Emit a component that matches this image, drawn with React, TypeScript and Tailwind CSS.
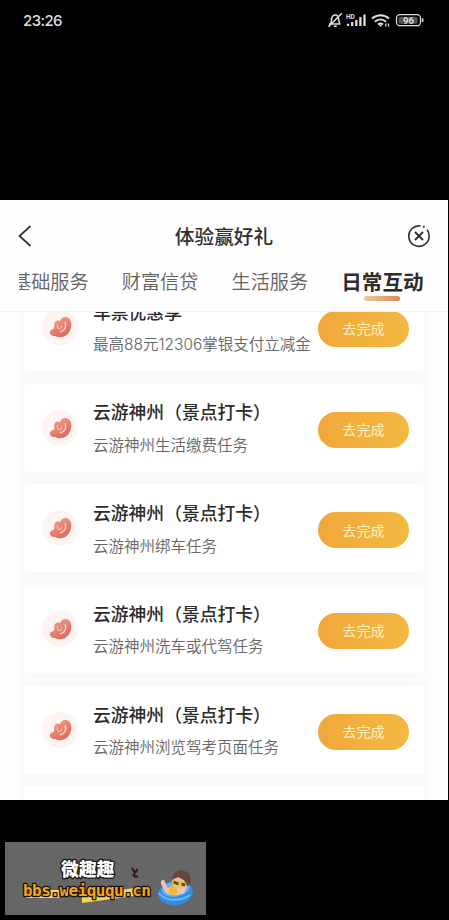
import { clsx } from "clsx";

interface Task {
  title: string;
  desc: string;
}

const tabs = ["基础服务", "财富信贷", "生活服务", "日常互动"];

const tasks: Task[] = [
  { title: "车票优惠享", desc: "最高88元12306掌银支付立减金" },
  { title: "云游神州（景点打卡）", desc: "云游神州生活缴费任务" },
  { title: "云游神州（景点打卡）", desc: "云游神州绑车任务" },
  { title: "云游神州（景点打卡）", desc: "云游神州洗车或代驾任务" },
  { title: "云游神州（景点打卡）", desc: "云游神州浏览驾考页面任务" },
];

function StatusBar() {
  return (
    <div className="flex h-10 items-center justify-between pl-[23px] pr-[25px] text-[#dedede]">
      <span className="mt-0.5 font-['Inter','Noto_Sans',sans-serif] text-[15px] font-medium tracking-[-0.6px]">
        23:26
      </span>
      <svg width="97" height="18" viewBox="0 0 97 18" fill="none" stroke="currentColor" strokeWidth="1.6">
        {/* muted bell */}
        <path d="M2 13h11.500M3.500 12.800c1.200-1.400.8-3.300 1.100-4.800C5 5.500 6.500 4 8.200 4s3.200 1.500 3.500 4c.2 1.500 0 3.300 1.200 4.800M6.800 15.200h3M14.800 2.200 1.500 15.800" />
        {/* signal */}
        <text x="19" y="7.500" fontSize="6.500" fontWeight="700" fill="currentColor" stroke="none" fontFamily="Roboto, sans-serif">
          HD
        </text>
        <path d="M21 15v-2.200M25.200 15v-4M29.300 15V9M33.400 15V6M37.500 15V3.500" strokeWidth="2.300" />
        {/* wifi */}
        <path d="M45 7.600c4.800-4.400 12.200-4.400 17 0M47.900 10.700c3.300-3 7.900-3 11.200 0M51 13.500c1.700-1.400 3.300-1.400 5 0" strokeWidth="2" />
        <path d="m51.700 13.700 1.800 2 1.800-2z" fill="currentColor" stroke="none" />
        <path d="M58.800 12.500v3M61.500 12.500v3" strokeWidth="1.300" />
        {/* battery */}
        <rect x="69.500" y="3.700" width="24" height="11" rx="3.500" strokeWidth="1.300" />
        <rect x="71.500" y="5.700" width="19" height="7" rx="1.500" fill="#555" stroke="none" />
        <path d="M95.600 7.500v3.500" strokeWidth="1.600" />
        <text x="81.500" y="12.600" textAnchor="middle" fontSize="9.500" fontWeight="700" fill="currentColor" stroke="none" fontFamily="Roboto, sans-serif">
          96
        </text>
      </svg>
    </div>
  );
}

function BeanIcon() {
  return (
    <div className="flex size-9 shrink-0 items-center justify-center rounded-full bg-[#fdf3f0]">
      <svg width="36" height="36" viewBox="0 0 36 36" fill="none">
        <defs>
          <linearGradient id="bean" x1="12" y1="8" x2="24" y2="29" gradientUnits="userSpaceOnUse">
            <stop stopColor="#eda08d" />
            <stop offset="1" stopColor="#dd6455" />
          </linearGradient>
        </defs>
        <path
          d="M12.300 17.500c-.6-3.300.6-5.600 3-6 1-.2 1.900 0 2.600.5C19.200 8.700 22.600 7 25.600 8.400c3.400 1.600 4.400 6 3.400 10.200-1.400 6-6 9.900-11.200 9.700-1.900-.1-3.300-.6-4.300-1.400-2.300.4-4.600-.6-5.400-2.500-.7-1.900.3-3.500 2.100-4 1.500-.4 2.300-1.300 2.100-2.900Z"
          fill="url(#bean)"
        />
        <path d="M23.300 13.800c1.100 4.400-.9 8-4.800 9" stroke="#fbd5ca" strokeWidth="1.500" strokeLinecap="round" />
        <path d="M15.300 15.500c-.2 2.200.5 3.700 2 4.200 1.600-.2 2.400-1.300 2.400-3" stroke="#f6bdb0" strokeWidth="1.100" strokeLinecap="round" />
      </svg>
    </div>
  );
}

function TaskCard({ title, desc }: Task) {
  return (
    <div className="flex h-[88px] shrink-0 items-center rounded-[3px] bg-white pl-[18px] pr-[15px] shadow-[0_0_14px_4px_rgba(0,0,0,0.03)]">
      <BeanIcon />
      <div className="mt-px ml-[15px] flex-1 whitespace-nowrap">
        <div className="text-[17.8px] leading-[26px] font-medium text-[#2b2b2b]">{title}</div>
        <div className="mt-[9.5px] font-['Inter','Noto_Sans_CJK_SC',sans-serif] text-[15.5px] leading-6 font-[350] text-[#666]">
          {desc}
        </div>
      </div>
      <button className="mt-1 h-9 w-[91px] shrink-0 rounded-full bg-linear-to-r from-[#f1a73a] to-[#f3b941] text-[14.2px] text-[#fff0c4]">
        去完成
      </button>
    </div>
  );
}

function Watermark() {
  return (
    <div className="absolute top-[842px] left-[5px] h-[73px] w-[201px] bg-[#666]">
      <svg width="201" height="73" viewBox="0 0 201 73">
        <path d="M21 48h33v8H21zM77 54l52-8v8l-52 7z" fill="#f6d45b" />
        <g stroke="#17120d" strokeWidth="2.500" strokeLinejoin="round" paintOrder="stroke">
          <text x="56" y="33.500" fontSize="17.800" fontWeight="900" fill="#fff" fontFamily="Noto Sans CJK SC, sans-serif">
            微趣趣
          </text>
          <text x="18" y="53.500" fontSize="16" fontWeight="700" fill="#f5a51c" textLength="128" lengthAdjust="spacing" fontFamily="DejaVu Sans Mono, monospace">
            bbs.weiququ.cn
          </text>
        </g>
        <path d="m127 26 2.500 4M132.500 27l-4.500 7M129 34.500h4" stroke="#2d1518" strokeWidth="2" />
        {/* kid on a swim ring */}
        <ellipse cx="170.500" cy="51" rx="17.500" ry="12" fill="#358ddd" transform="rotate(-8 170.500 51)" />
        <ellipse cx="170.500" cy="47" rx="14" ry="7.500" fill="#5eb2f2" transform="rotate(-8 170.500 47)" />
        <path d="M156 42c-1-4 3-6 4-2l3 6 7-4 9-1c4 1 3 7 0 10-5 3-15 3-19-1z" fill="#f0c3b0" />
        <path d="M165 45c4-3 8 0 7 6-3 3-7 2-8-1z" fill="#efba22" />
        <ellipse cx="175" cy="40" rx="8" ry="7" fill="#edb89e" />
        <path d="M167 38c0-7 6-11 12-9 6 1 8 7 6 13l-3 2-3-6-6-3z" fill="#65463a" />
        <path d="m168 38 6 2v4l-6-2zM176 40l5 1-1 4-4-1z" fill="#594b1c" stroke="#edc633" strokeWidth="1" />
        <path d="M154 51c5 7 19 10 31 2" fill="none" stroke="#6bb9fa" strokeWidth="2" />
      </svg>
    </div>
  );
}

export default function App() {
  return (
    <div className="relative h-[920px] w-[449px] overflow-hidden bg-black font-['Noto_Sans_CJK_SC',sans-serif]">
      <StatusBar />
      <main className="mt-40 flex h-[600px] w-[448px] flex-col overflow-hidden bg-[#fefefe]">
        <header className="flex h-[67px] shrink-0 items-center justify-between px-[17px] pt-1 text-[#303030]">
          <svg width="24" height="24" viewBox="0 0 24 24" fill="none" stroke="currentColor" strokeWidth="1.7">
            <path d="M13.500 2 2.500 12l11 10" />
          </svg>
          <h1 className="text-[19.700px] font-medium">体验赢好礼</h1>
          <svg width="24" height="24" viewBox="0 0 24 24" fill="none" stroke="currentColor" strokeWidth="1.600">
            <path d="M13.500 2a10.200 10.200 0 1 0 6.500 3.800" />
            <path d="m8 8 8 8M16 8l-8 8" strokeWidth="1.900" />
            <path d="M16 2.300l1.600.8" strokeWidth="2" />
          </svg>
        </header>
        <nav className="ml-[19px] flex h-11 shrink-0 overflow-hidden pt-0.5">
          <div className="-ml-[7px] flex gap-[33px]">
            {tabs.map((tab, i) => {
              const active = i === tabs.length - 1;
              return (
                <div
                  key={tab}
                  className={clsx(
                    "flex flex-col items-center whitespace-nowrap leading-6",
                    active ? "text-[20.600px] font-bold text-[#2d2d2d]" : "text-[19.200px] font-[350] text-[#636363]",
                  )}
                >
                  <span>{tab}</span>
                  {active && <span className="mt-[3px] h-[5px] w-9 rounded-sm bg-linear-to-r from-[#efc895] to-[#d88b58]" />}
                </div>
              );
            })}
          </div>
        </nav>
        <section className="flex-1 overflow-hidden border-t border-[#f1f1f1] px-6">
          <div className="-mt-[29px] flex flex-col gap-[12.700px]">
            {tasks.map((task, i) => (
              <TaskCard key={i} {...task} />
            ))}
            <div className="h-[88px] shrink-0 rounded-[3px] bg-white shadow-[0_0_14px_4px_rgba(0,0,0,0.03)]" />
          </div>
        </section>
      </main>
      <Watermark />
    </div>
  );
}
